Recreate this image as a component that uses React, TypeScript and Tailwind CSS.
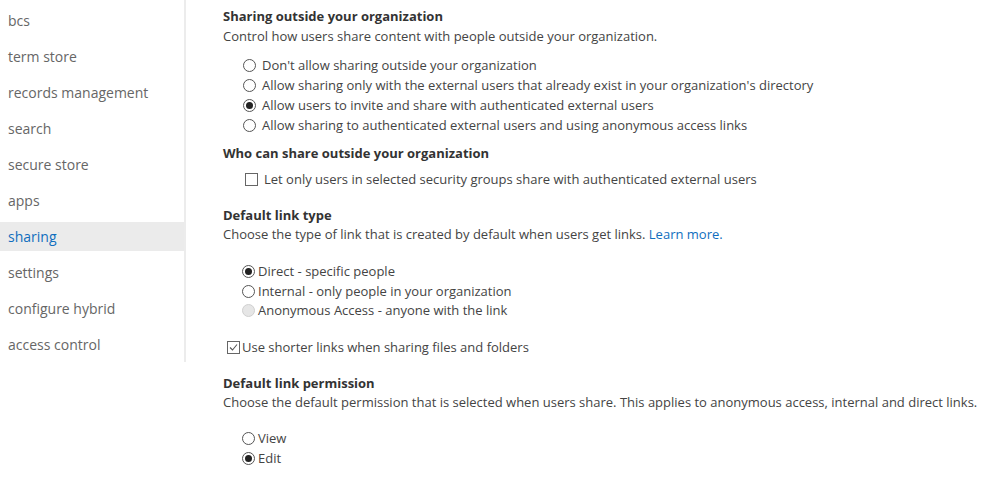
import React from 'react';

const NAV = [
  'bcs',
  'term store',
  'records management',
  'search',
  'secure store',
  'apps',
  'sharing',
  'settings',
  'configure hybrid',
  'access control',
];

function Radio({ checked, disabled }: { checked?: boolean; disabled?: boolean }) {
  return (
    <span
      className={`flex h-[13px] w-[13px] shrink-0 items-center justify-center rounded-full border ${
        disabled ? 'border-[#d0d0d0] bg-[#e6e6e6]' : 'border-[#555] bg-white'
      }`}
    >
      {checked && <span className="h-[7px] w-[7px] rounded-full bg-[#222]" />}
    </span>
  );
}

function Checkbox({ checked }: { checked?: boolean }) {
  return (
    <span className="flex h-[13px] w-[13px] shrink-0 items-center justify-center border border-[#666] bg-white">
      {checked && (
        <svg width="9" height="9" viewBox="0 0 9 9" fill="none">
          <path d="M1 4.5 L3.5 7 L8 1.5" stroke="#555" strokeWidth="1.1" />
        </svg>
      )}
    </span>
  );
}

function Option({
  label,
  checked,
  disabled,
  gap = 'gap-[6px]',
  h = 'h-[20px]',
}: {
  label: string;
  checked?: boolean;
  disabled?: boolean;
  gap?: string;
  h?: string;
}) {
  return (
    <div className={`flex items-center ${h} ${gap}`}>
      <Radio checked={checked} disabled={disabled} />
      <span>{label}</span>
    </div>
  );
}

function Heading({ children, className = '' }: { children: React.ReactNode; className?: string }) {
  return <h3 className={`font-bold text-[#333] ${className}`}>{children}</h3>;
}

export default function App() {
  return (
    <div
      className="flex min-h-[477px] w-[999px] bg-white text-[13px] leading-[20px] text-[#444]"
      style={{ fontFamily: '"Open Sans", "Noto Sans", sans-serif' }}
    >
      <nav className="flex h-[362px] w-[186px] shrink-0 flex-col gap-[7px] border-r-2 border-[#ececec] pt-[6px]">
        {NAV.map((item) => (
          <div
            key={item}
            className={`flex h-[29px] items-center pl-[8px] text-[14px] ${
              item === 'sharing' ? 'bg-[#ebebeb] text-[#106ebe]' : 'text-[#666]'
            }`}
          >
            {item}
          </div>
        ))}
      </nav>

      <main className="flex flex-col pl-[37px] pt-[6px]">
        <Heading>Sharing outside your organization</Heading>
        <p>Control how users share content with people outside your organization.</p>
        <div className="mt-[9px] flex flex-col pl-[20px]">
          <Option label="Don't allow sharing outside your organization" />
          <Option label="Allow sharing only with the external users that already exist in your organization's directory" />
          <Option label="Allow users to invite and share with authenticated external users" checked />
          <Option label="Allow sharing to authenticated external users and using anonymous access links" />
        </div>

        <Heading className="mt-[8px]">Who can share outside your organization</Heading>
        <div className="mt-[6px] flex h-[20px] items-center gap-[6px] pl-[22px]">
          <Checkbox />
          <span>Let only users in selected security groups share with authenticated external users</span>
        </div>

        <Heading className="mt-[16px]">Default link type</Heading>
        <p className="-mt-[1px]">
          Choose the type of link that is created by default when users get links.{' '}
          <span className="text-[#106ebe]">Learn more.</span>
        </p>
        <div className="mt-[17px] flex flex-col pl-[19px]">
          <Option label="Direct - specific people" checked gap="gap-[3px]" />
          <Option label="Internal - only people in your organization" gap="gap-[3px]" />
          <Option label="Anonymous Access - anyone with the link" disabled gap="gap-[3px]" h="h-[18px]" />
        </div>

        <div className="mt-[18px] flex h-[20px] items-center gap-[2px] pl-[4px]">
          <Checkbox checked />
          <span>Use shorter links when sharing files and folders</span>
        </div>

        <Heading className="mt-[16px]">Default link permission</Heading>
        <p className="-mt-[1px]">
          Choose the default permission that is selected when users share. This applies to anonymous access, internal
          and direct links.
        </p>
        <div className="mt-[16px] flex flex-col pl-[19px]">
          <Option label="View" gap="gap-[3px]" />
          <Option label="Edit" checked gap="gap-[3px]" />
        </div>
      </main>
    </div>
  );
}
